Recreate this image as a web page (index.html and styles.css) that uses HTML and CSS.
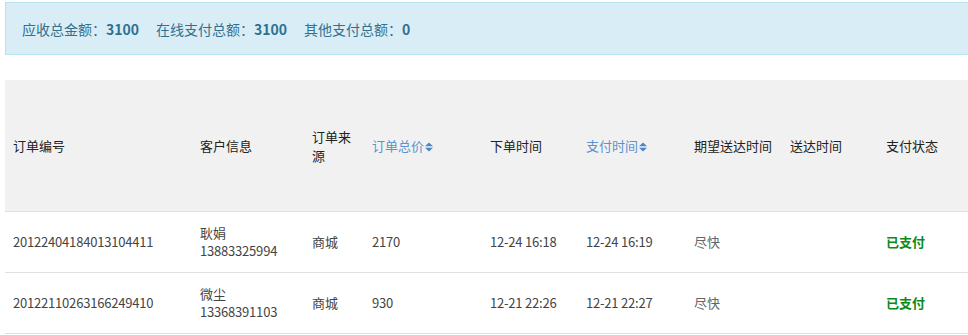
FILE: index.html
```html
<!DOCTYPE html>
<html lang="zh">
<head>
<meta charset="utf-8">
<link rel="stylesheet" href="styles.css">
</head>
<body>
<div class="page">
  <div class="alert">
    <span class="item">应收总金额：<b>3100</b></span>
    <span class="item">在线支付总额：<b>3100</b></span>
    <span class="item">其他支付总额：<b>0</b></span>
  </div>
  <table class="orders">
    <colgroup>
      <col class="c1"><col class="c2"><col class="c3"><col class="c4"><col class="c5"><col class="c6"><col class="c7"><col class="c8"><col class="c9">
    </colgroup>
    <thead>
      <tr>
        <th>订单编号</th>
        <th>客户信息</th>
        <th>订单来源</th>
        <th><a class="sort">订单总价<svg class="caret" viewBox="0 0 8 10" width="8" height="10"><path d="M0 4.2 L4 0.5 L8 4.2 Z M0 5.8 L4 9.5 L8 5.8 Z" fill="#4a86c8"/></svg></a></th>
        <th>下单时间</th>
        <th><a class="sort">支付时间<svg class="caret" viewBox="0 0 8 10" width="8" height="10"><path d="M0 4.2 L4 0.5 L8 4.2 Z M0 5.8 L4 9.5 L8 5.8 Z" fill="#4a86c8"/></svg></a></th>
        <th>期望送达时间</th>
        <th>送达时间</th>
        <th>支付状态</th>
      </tr>
    </thead>
    <tbody>
      <tr>
        <td class="num">20122404184013104411</td>
        <td>耿娟<br><span class="num">13883325994</span></td>
        <td>商城</td>
        <td class="num">2170</td>
        <td class="num">12-24 16:18</td>
        <td class="num">12-24 16:19</td>
        <td class="muted">尽快</td>
        <td></td>
        <td class="paid">已支付</td>
      </tr>
      <tr>
        <td class="num">20122110263166249410</td>
        <td>微尘<br><span class="num">13368391103</span></td>
        <td>商城</td>
        <td class="num">930</td>
        <td class="num">12-21 22:26</td>
        <td class="num">12-21 22:27</td>
        <td class="muted">尽快</td>
        <td></td>
        <td class="paid">已支付</td>
      </tr>
    </tbody>
  </table>
</div>
</body>
</html>
```
FILE: styles.css
```css
html, body {
  margin: 0;
  padding: 0;
  overflow: hidden;
  background: #fff;
}
body {
  font-family: "Noto Sans CJK SC", "Noto Sans", sans-serif;
  font-size: 13px;
  color: #333;
}
.page {
  padding: 2px 0 0 5px;
  width: 1000px;
}
.alert {
  box-sizing: border-box;
  height: 53px;
  border: 1px solid #b5e3ef;
  background: #d9edf7;
  color: #31708f;
  display: flex;
  align-items: center;
  padding: 0 16px;
  gap: 17px;
  font-size: 14px;
}
.alert b {
  font-weight: 700;
}
.orders {
  margin-top: 25px;
  border-collapse: collapse;
  table-layout: fixed;
  width: 1000px;
}
.c1 { width: 187px; }
.c2 { width: 112px; }
.c3 { width: 60px; }
.c4 { width: 118px; }
.c5 { width: 96px; }
.c6 { width: 108px; }
.c7 { width: 96px; }
.c8 { width: 96px; }
.c9 { width: 227px; }
.orders th {
  background: #f1f1f1;
  height: 131px;
  padding: 0 8px;
  text-align: left;
  font-weight: 400;
  color: #222;
  line-height: 19px;
  border-bottom: 1px solid #e0e0e0;
  vertical-align: middle;
}
.sort {
  color: #5b92d0;
  white-space: nowrap;
}
.caret {
  vertical-align: -1px;
  margin-left: 1px;
}
.orders td {
  padding: 12px 8px;
  line-height: 18px;
  height: 36px;
  color: #444;
  border-bottom: 1px solid #e0e0e0;
  vertical-align: middle;
  white-space: nowrap;
}
.num {
  letter-spacing: -0.2px;
}
.orders td.muted {
  color: #666;
}
.orders td.paid {
  color: #0a8a1a;
  font-weight: 700;
}
```
